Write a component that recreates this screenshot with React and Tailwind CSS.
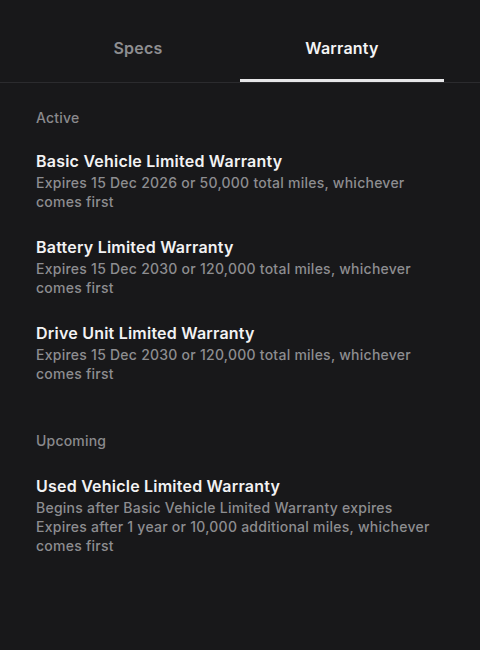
import React, { useState } from 'react';

const active = [
  {
    title: 'Basic Vehicle Limited Warranty',
    lines: ['Expires 15 Dec 2026 or 50,000 total miles, whichever comes first'],
  },
  {
    title: 'Battery Limited Warranty',
    lines: ['Expires 15 Dec 2030 or 120,000 total miles, whichever comes first'],
  },
  {
    title: 'Drive Unit Limited Warranty',
    lines: ['Expires 15 Dec 2030 or 120,000 total miles, whichever comes first'],
  },
];

const upcoming = [
  {
    title: 'Used Vehicle Limited Warranty',
    lines: [
      'Begins after Basic Vehicle Limited Warranty expires',
      'Expires after 1 year or 10,000 additional miles, whichever comes first',
    ],
  },
];

function WarrantyItem({ item }) {
  return (
    <div>
      <div className="text-[16px] leading-[24px] font-semibold tracking-[0.22px] text-[#f2f2f3]">
        {item.title}
      </div>
      {item.lines.map((line, i) => (
        <div key={i} className="text-[14px] leading-[19px] font-medium tracking-[0.25px] text-[#8d8d90]">
          {line}
        </div>
      ))}
    </div>
  );
}

function Section({ label, items, offset }) {
  return (
    <div>
      <div className="text-[14px] leading-[20px] font-medium tracking-[0.2px] text-[#8a8a8d]">{label}</div>
      <div className={'flex flex-col gap-6 ' + offset}>
        {items.map((item) => (
          <WarrantyItem key={item.title} item={item} />
        ))}
      </div>
    </div>
  );
}

export default function App() {
  const [tab, setTab] = useState('warranty');

  return (
    <div
      className="w-[480px] h-[650px] bg-[#18181a] overflow-hidden"
      style={{ fontFamily: 'Inter, "Noto Sans", sans-serif' }}
    >
      <div className="border-b border-[#2b2b2e]">
        <div className="flex px-9">
          {[
            ['specs', 'Specs'],
            ['warranty', 'Warranty'],
          ].map(([key, name]) => (
            <button
              key={key}
              onClick={() => setTab(key)}
              className="flex-1 flex flex-col items-center pt-9"
            >
              <span
                className={
                  'text-[16px] leading-[24px] font-semibold tracking-[0.2px] ' +
                  (tab === key ? 'text-[#f4f4f5]' : 'text-[#8e8e91]')
                }
              >
                {name}
              </span>
              <span
                className={
                  'mt-[19px] h-[3px] w-full ' + (tab === key ? 'bg-[#e6e6e8]' : 'bg-transparent')
                }
              />
            </button>
          ))}
        </div>
      </div>

      <div className="pl-9 pr-[50px] pt-[25px] flex flex-col gap-[48px]">
        <Section label="Active" items={active} offset="mt-[21px]" />
        <Section label="Upcoming" items={upcoming} offset="mt-[23px]" />
      </div>
    </div>
  );
}
